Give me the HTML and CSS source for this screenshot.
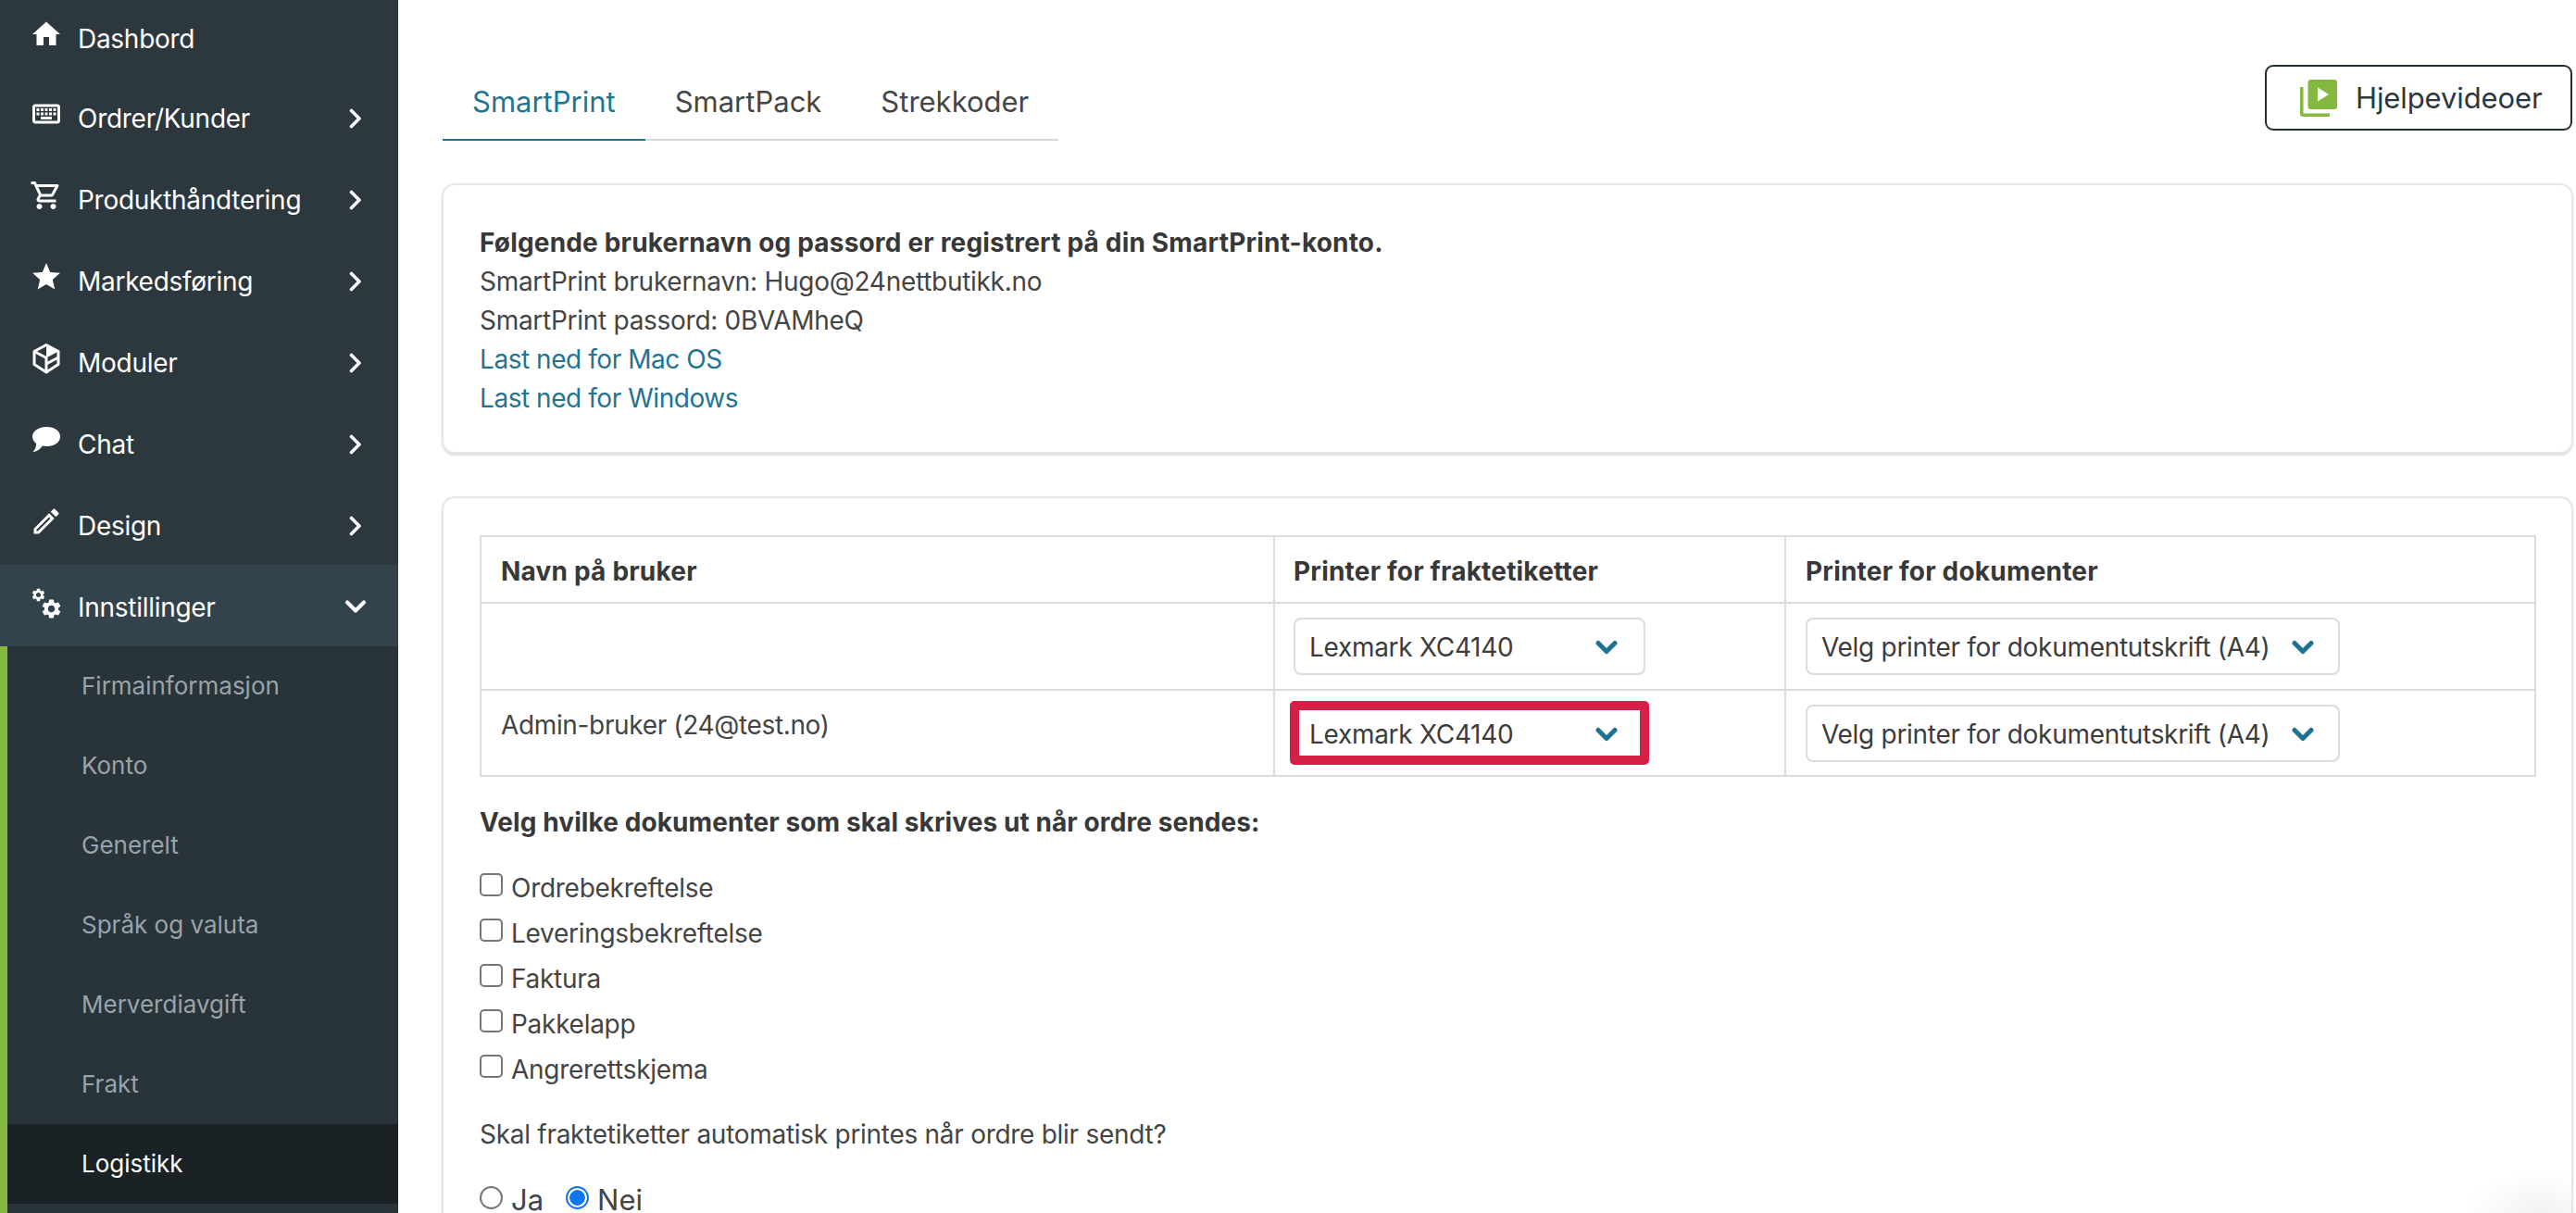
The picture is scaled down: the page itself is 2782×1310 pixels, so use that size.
FILE: index.html
```html
<!DOCTYPE html>
<html lang="no">
<head>
<meta charset="utf-8">
<title>SmartPrint</title>
<link rel="stylesheet" href="styles.css">
</head>
<body>
<svg class="defs" width="0" height="0" aria-hidden="true">
  <defs>
    <symbol id="chev-r" viewBox="0 0 14 22"><path d="M2.5 2.5 11 11l-8.500 8.500" fill="none" stroke="currentColor" stroke-width="3.600" stroke-linecap="round" stroke-linejoin="round"/></symbol>
    <symbol id="chev-d" viewBox="0 0 24 16"><path d="M3 3.500 12 12.500l9-9" fill="none" stroke="currentColor" stroke-width="4.200" stroke-linecap="round" stroke-linejoin="round"/></symbol>
    <symbol id="chev-s" viewBox="0 0 24 16"><path d="M3 3.500 12 12.500l9-9" fill="none" stroke="currentColor" stroke-width="5" stroke-linecap="round" stroke-linejoin="round"/></symbol>
    <symbol id="gear" viewBox="0 0 24 24"><path fill="currentColor" d="M19.140 12.940c.04-.3.06-.61.06-.94 0-.32-.02-.64-.07-.94l2.030-1.580c.18-.14.23-.41.12-.61l-1.920-3.320c-.12-.22-.37-.29-.59-.22l-2.390.96c-.5-.38-1.030-.7-1.620-.94l-.36-2.540c-.04-.24-.24-.41-.48-.41h-3.840c-.24 0-.43.17-.47.41l-.36 2.540c-.59.24-1.130.57-1.620.94l-2.390-.96c-.22-.08-.47 0-.59.22L2.740 8.870c-.12.21-.08.47.12.61l2.030 1.580c-.05.3-.09.63-.09.94s.02.64.07.94l-2.030 1.580c-.18.14-.23.41-.12.61l1.920 3.320c.12.22.37.29.59.22l2.390-.96c.5.38 1.030.7 1.620.94l.36 2.540c.05.24.24.41.48.41h3.840c.24 0 .44-.17.47-.41l.36-2.540c.59-.24 1.130-.56 1.620-.94l2.390.96c.22.08.47 0 .59-.22l1.920-3.320c.12-.22.07-.47-.12-.61l-2.010-1.580zM12 15.600c-1.980 0-3.600-1.620-3.600-3.600s1.620-3.600 3.600-3.600 3.600 1.620 3.600 3.600-1.620 3.600-3.600 3.600z"/></symbol>
  </defs>
</svg>
<div class="app">
  <aside class="sidebar">
    <nav class="menu">
      <a class="item first"><svg class="ico" viewBox="0 0 24 24"><path fill="currentColor" d="M10 20v-6h4v6h5v-8h3L12 3 2 12h3v8z"/></svg><span class="label">Dashbord</span></a>
      <a class="item"><svg class="ico" viewBox="0 0 24 24"><path fill="currentColor" d="M20 7v10H4V7h16m0-2H4c-1.100 0-1.990.9-1.990 2L2 17c0 1.100.9 2 2 2h16c1.100 0 2-.9 2-2V7c0-1.100-.9-2-2-2zm-9 3h2v2h-2zm0 3h2v2h-2zM8 8h2v2H8zm0 3h2v2H8zm-3 0h2v2H5zm0-3h2v2H5zm3 6h8v2H8zm6-3h2v2h-2zm0-3h2v2h-2zm3 3h2v2h-2zm0-3h2v2h-2z"/></svg><span class="label">Ordrer/Kunder</span><svg class="chev"><use href="#chev-r"/></svg></a>
      <a class="item"><svg class="ico" viewBox="0 0 24 24"><path fill="currentColor" d="M15.550 13c.75 0 1.410-.41 1.750-1.030l3.580-6.490c.37-.66-.11-1.480-.87-1.480H5.210l-.94-2H1v2h2l3.600 7.590-1.350 2.440C4.520 15.370 5.480 17 7 17h12v-2H7l1.100-2h7.450zM6.160 6h12.150l-2.760 5H8.530L6.160 6zM7 18c-1.100 0-1.990.9-1.990 2S5.900 22 7 22s2-.9 2-2-.9-2-2-2zm10 0c-1.100 0-1.990.9-1.990 2s.89 2 1.990 2 2-.9 2-2-.9-2-2-2z"/></svg><span class="label">Produkthåndtering</span><svg class="chev"><use href="#chev-r"/></svg></a>
      <a class="item"><svg class="ico" viewBox="0 0 24 24"><path fill="currentColor" d="M12 17.270 18.180 21l-1.640-7.030L22 9.240l-7.190-.61L12 2 9.190 8.630 2 9.240l5.460 4.730L5.820 21z"/></svg><span class="label">Markedsføring</span><svg class="chev"><use href="#chev-r"/></svg></a>
      <a class="item"><svg class="ico" viewBox="0 0 36 36"><path fill="none" stroke="currentColor" stroke-width="3" stroke-linejoin="round" d="M18 3.500 31 10.500v14L18 33 5 24.500v-14z"/><path fill="currentColor" d="M18 3.500 31 10.500 18 17.500z"/><path fill="none" stroke="currentColor" stroke-width="3" stroke-linejoin="round" d="M5 10.500 18 17.500v15.500M18 24l13-7"/></svg><span class="label">Moduler</span><svg class="chev"><use href="#chev-r"/></svg></a>
      <a class="item"><svg class="ico" viewBox="0 0 36 36"><path fill="currentColor" d="M18.500 4C27 4 33 8.600 33 14.500S27 25 18.500 25c-1.700 0-3.200-.2-4.600-.5C12 27 8.500 31 3.500 31c2-2.200 3.600-5 3.700-9C4.700 20 3 17.500 3 14.500 3 8.600 10 4 18.500 4z"/></svg><span class="label">Chat</span><svg class="chev"><use href="#chev-r"/></svg></a>
      <a class="item"><svg class="ico" viewBox="0 0 24 24"><path fill="currentColor" d="M14.060 9.020l.92.92L5.920 19H5v-.92l9.060-9.060M17.660 3c-.25 0-.51.1-.7.29l-1.830 1.830 3.750 3.750 1.830-1.830c.39-.39.39-1.020 0-1.410l-2.340-2.340c-.2-.2-.45-.29-.71-.29zm-3.600 3.190L3 17.250V21h3.750L17.810 9.940l-3.750-3.750z"/></svg><span class="label">Design</span><svg class="chev"><use href="#chev-r"/></svg></a>
      <a class="item open"><svg class="ico" viewBox="0 0 36 36"><use href="#gear" x="1" y="1" width="17" height="17"/><use href="#gear" x="11" y="12" width="25" height="25"/></svg><span class="label">Innstillinger</span><svg class="chev-open"><use href="#chev-d"/></svg></a>
    </nav>
    <ul class="submenu">
      <li class="sub">Firmainformasjon</li>
      <li class="sub">Konto</li>
      <li class="sub">Generelt</li>
      <li class="sub">Språk og valuta</li>
      <li class="sub">Merverdiavgift</li>
      <li class="sub">Frakt</li>
      <li class="sub active">Logistikk</li>
    </ul>
  </aside>
  <main class="main">
    <header class="topbar">
      <div class="tabs">
        <a class="tab current">SmartPrint</a>
        <a class="tab">SmartPack</a>
        <a class="tab">Strekkoder</a>
      </div>
      <button class="help" type="button">
        <svg class="help-ico" viewBox="0 0 40 40"><path fill="#84b83f" d="M0 8h3.500v28.500H32V40H3a3 3 0 0 1-3-3z"/><rect x="8.500" y="0" width="31.500" height="32" rx="3" fill="#84b83f"/><path fill="#fff" d="M19 8.500 31 16 19 23.500z"/></svg>
        <span>Hjelpevideoer</span>
      </button>
    </header>
    <section class="card info">
      <p class="strong">Følgende brukernavn og passord er registrert på din SmartPrint-konto.</p>
      <p>SmartPrint brukernavn: Hugo@24nettbutikk.no</p>
      <p>SmartPrint passord: 0BVAMheQ</p>
      <p><a class="link">Last ned for Mac OS</a></p>
      <p><a class="link">Last ned for Windows</a></p>
    </section>
    <section class="card settings">
      <table class="users">
        <colgroup><col class="c1"><col class="c2"><col class="c3"></colgroup>
        <thead>
          <tr class="r-head"><th>Navn på bruker</th><th class="mid">Printer for fraktetiketter</th><th>Printer for dokumenter</th></tr>
        </thead>
        <tbody>
          <tr class="r-a">
            <td></td>
            <td class="mid"><div class="select narrow"><span>Lexmark XC4140</span><svg class="sel-chev"><use href="#chev-s"/></svg></div></td>
            <td><div class="select wide"><span>Velg printer for dokumentutskrift (A4)</span><svg class="sel-chev"><use href="#chev-s"/></svg></div></td>
          </tr>
          <tr class="r-b">
            <td class="name">Admin-bruker (24@test.no)</td>
            <td class="mid"><div class="select narrow marked"><span>Lexmark XC4140</span><svg class="sel-chev"><use href="#chev-s"/></svg><i class="mark"></i></div></td>
            <td><div class="select wide"><span>Velg printer for dokumentutskrift (A4)</span><svg class="sel-chev"><use href="#chev-s"/></svg></div></td>
          </tr>
        </tbody>
      </table>
      <p class="strong docs-title">Velg hvilke dokumenter som skal skrives ut når ordre sendes:</p>
      <div class="checks">
        <label class="check"><input type="checkbox"><span>Ordrebekreftelse</span></label>
        <label class="check"><input type="checkbox"><span>Leveringsbekreftelse</span></label>
        <label class="check"><input type="checkbox"><span>Faktura</span></label>
        <label class="check"><input type="checkbox"><span>Pakkelapp</span></label>
        <label class="check"><input type="checkbox"><span>Angrerettskjema</span></label>
      </div>
      <p class="question">Skal fraktetiketter automatisk printes når ordre blir sendt?</p>
      <div class="radios">
        <label class="radio"><input type="radio" name="auto"><span>Ja</span></label>
        <label class="radio"><input type="radio" name="auto" checked><span>Nei</span></label>
      </div>
    </section>
  </main>
</div>
<div class="corner-shade"></div>
</body>
</html>
```
FILE: styles.css
```css
* { box-sizing: border-box; }
html, body { margin: 0; height: 1310px; overflow: hidden; background: #fff; }
body { font-family: Inter, "Liberation Sans", sans-serif; font-size: 28px; line-height: 42px; letter-spacing: -.28px; color: #444; position: relative; }
.defs { position: absolute; }
p { margin: 0; }
ul { list-style: none; margin: 0; padding: 0; }

.app { display: flex; height: 1310px; }

/* Sidebar */
.sidebar { width: 430px; flex: none; background: #2d373e; color: #fff; overflow: hidden; }
.menu { margin-top: -2px; }
.item { display: flex; align-items: center; height: 88px; padding: 4px 0 0 32px; color: #fff; }
.item.first { height: 84px; }
.item.open { background: #33434b; }
.ico { width: 36px; height: 36px; flex: none; margin-bottom: 10px; }
.label { margin-left: 16px; flex: 1; line-height: 40px; }
.chev { width: 14px; height: 22px; margin-right: 39px; flex: none; }
.chev-open { width: 24px; height: 16px; margin-right: 34px; margin-bottom: 2px; flex: none; }
.submenu { border-left: 8px solid #84b83f; background: #29333a; height: 620px; }
.sub { height: 86px; display: flex; align-items: center; padding-left: 80px; color: #9aa3aa; font-size: 26px; letter-spacing: 0; }
.sub.active { background: #1a2225; color: #fff; }

/* Main */
.main { flex: 1; min-width: 0; padding: 70px 3px 0 47px; }
.topbar { display: flex; justify-content: space-between; align-items: flex-start; height: 82px; margin: 0 1px; }
.tabs { display: flex; height: 82px; border-bottom: 2px solid #d8d8d8; padding-top: 19px; }
.tab { height: 63px; padding: 0 32px; font-size: 31px; line-height: 42px; letter-spacing: 0; color: #454545; }
.tab.current { color: #1f7491; border-bottom: 2px solid #1f7491; }
.help { display: flex; align-items: center; width: 332px; height: 71px; padding: 0 0 0 36px; gap: 20px; background: #fff; border: 2px solid #222d31; border-radius: 9px; font: inherit; font-size: 31px; letter-spacing: -.1px; color: #2c373d; }
.help-ico { width: 40px; height: 40px; flex: none; }

.card { border: 2px solid #e6e6e6; border-radius: 14px; box-shadow: 0 2px 2px rgba(0, 0, 0, .13); background: #fff; padding: 0 38px 0 39px; }
.info { margin-top: 46px; height: 292px; padding-top: 41px; }
.settings { margin-top: 46px; padding-top: 40px; height: 900px; }
.strong { font-weight: 700; letter-spacing: .18px; color: #383838; }
.link { color: #1f7491; letter-spacing: -.45px; }

/* Table */
.users { border-collapse: collapse; table-layout: fixed; width: 2219px; }
.c1 { width: 857px; }
.c2 { width: 552px; }
.c3 { width: 810px; }
.users th, .users td { border: 2px solid #dcdcdc; padding: 0 20px 0 21px; text-align: left; }
.users th { font-weight: 700; letter-spacing: .2px; color: #383838; padding-top: 3px; }
.users .mid { padding-left: 20px; }
.r-head { height: 72px; }
.r-a { height: 94px; }
.r-b { height: 93px; }
.users td.name { vertical-align: top; padding-top: 16px; letter-spacing: -.35px; }
.select { position: relative; display: flex; align-items: center; justify-content: space-between; height: 62px; padding: 2px 28px 0 15px; border: 2px solid #dcdcdc; border-radius: 8px; background: #fff; color: #3c3c3c; letter-spacing: -.3px; }
.narrow { width: 380px; }
.wide { width: 577px; padding-right: 26px; }
.sel-chev { width: 24px; height: 16px; color: #1c7391; flex: none; }
.mark { position: absolute; inset: -6px -6px -5px -6px; border: 10px solid #d61f47; border-radius: 5px; }

/* Options */
.docs-title { margin-top: 28px; letter-spacing: .09px; }
.checks { margin-top: 25px; }
.check { display: flex; align-items: center; height: 49px; }
.check input { appearance: none; margin: 0 9px 7px 0; width: 25px; height: 25px; border: 2px solid #767676; border-radius: 5px; background: #fff; flex: none; }
.question { margin-top: 25px; }
.radios { display: flex; margin-top: 29px; gap: 24px; }
.radio { display: flex; align-items: center; height: 42px; font-size: 31px; letter-spacing: 0; }
.radio input { appearance: none; margin: 0 9px 5px 0; width: 25px; height: 25px; border: 2px solid #767676; border-radius: 50%; background: #fff; flex: none; }
.radio input:checked { border-color: #0f76ee; background: radial-gradient(circle, #0f76ee 0 8px, #fff 8.500px); }

.corner-shade { position: absolute; right: 4px; bottom: 0; width: 120px; height: 45px; background: radial-gradient(ellipse at 70% 100%, rgba(0, 0, 0, .05), rgba(0, 0, 0, 0) 70%); pointer-events: none; }
```
